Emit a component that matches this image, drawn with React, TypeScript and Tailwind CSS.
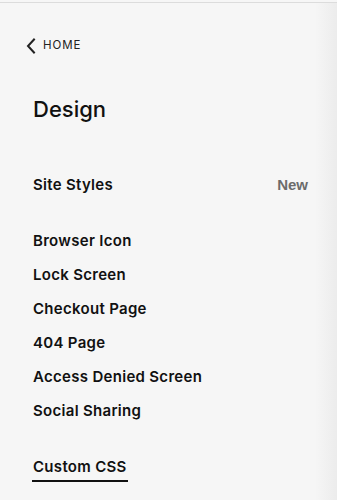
const PAGES = ['Browser Icon', 'Lock Screen', 'Checkout Page', '404 Page', 'Access Denied Screen', 'Social Sharing'];

const NavRow = ({ label, right }: { label: string; right?: string }) => (
    <div className="h-5 flex items-center justify-between">
        <span className="text-[15px] font-semibold tracking-[0.02em] text-[#111]">{label}</span>
        {right && (
            <span className="text-[15px] font-bold text-[#6b6b6b] font-['Liberation_Sans',Arial,sans-serif]">{right}</span>
        )}
    </div>
);

export default function App() {
    return (
        <div className="h-[500px] w-full bg-[#f6f6f6] flex flex-col font-['Inter',sans-serif] overflow-hidden">
            <div className="h-[2px]"></div>
            <div className="h-px bg-[#dcdcdc]"></div>

            <div className="flex flex-1">
                {/* Panel */}
                <div className="flex-1 pl-[33px] pr-[7px] flex flex-col">
                    <div className="mt-[33px] h-5 flex items-center -ml-[7px] gap-[7px] text-[#222]">
                        <svg width="10" height="16" viewBox="0 0 10 16" fill="none" stroke="currentColor" strokeWidth="2" strokeLinecap="square">
                            <path d="M8 1.5 L2 8 L8 14.5" />
                        </svg>
                        <span className="text-[11.5px] font-normal uppercase tracking-[0.08em]">Home</span>
                    </div>

                    <h1 className="mt-[38px] h-[30px] flex items-center text-[22px] font-medium text-[#111]">Design</h1>

                    <div className="mt-[51px]">
                        <NavRow label="Site Styles" right="New" />
                    </div>

                    <div className="mt-[36px] flex flex-col gap-[14px]">
                        {PAGES.map(p => (
                            <NavRow key={p} label={p} />
                        ))}
                    </div>

                    <div className="mt-[36px] w-fit">
                        <NavRow label="Custom CSS" />
                        <div className="mt-[3px] h-[2px] -mx-px bg-[#111]"></div>
                    </div>
                </div>

                {/* Edge shade */}
                <div className="w-[22px] bg-linear-to-r from-[#f6f6f6] to-[#ececec]"></div>
            </div>
        </div>
    );
}
